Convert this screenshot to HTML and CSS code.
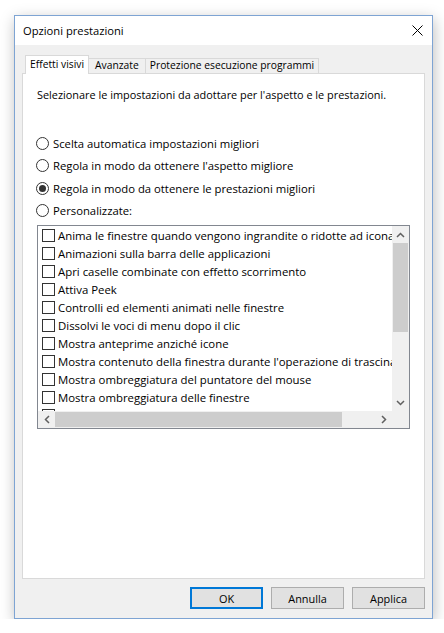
FILE: index.html
```html
<!DOCTYPE html>
<html lang="it">
<head>
  <meta charset="UTF-8">
  <meta name="viewport" content="width=device-width, initial-scale=1.0">
  <title>Opzioni prestazioni</title>
  <link rel="stylesheet" href="styles.css">
</head>
<body>
  <div class="window">
    <div class="titlebar">
      <span class="title">Opzioni prestazioni</span>
      <svg class="close" width="11" height="11" viewBox="0 0 11 11">
        <path d="M0.5 0.5 L10.5 10.5 M10.5 0.5 L0.5 10.5" stroke="#000" stroke-width="1" fill="none"/>
      </svg>
    </div>
    <div class="client">
      <div class="tabs">
        <div class="tab active">Effetti visivi</div>
        <div class="tab">Avanzate</div>
        <div class="tab">Protezione esecuzione programmi</div>
      </div>
      <div class="panel">
        <p class="intro">Selezionare le impostazioni da adottare per l'aspetto e le prestazioni.</p>
        <div class="radios">
          <label class="radio"><span class="dot"></span>Scelta automatica impostazioni migliori</label>
          <label class="radio"><span class="dot"></span>Regola in modo da ottenere l'aspetto migliore</label>
          <label class="radio"><span class="dot checked"></span>Regola in modo da ottenere le prestazioni migliori</label>
          <label class="radio"><span class="dot"></span>Personalizzate:</label>
        </div>
        <div class="listbox">
          <div class="items">
            <div class="item"><span class="box"></span>Anima le finestre quando vengono ingrandite o ridotte ad icona</div>
            <div class="item"><span class="box"></span>Animazioni sulla barra delle applicazioni</div>
            <div class="item"><span class="box"></span>Apri caselle combinate con effetto scorrimento</div>
            <div class="item"><span class="box"></span>Attiva Peek</div>
            <div class="item"><span class="box"></span>Controlli ed elementi animati nelle finestre</div>
            <div class="item"><span class="box"></span>Dissolvi le voci di menu dopo il clic</div>
            <div class="item"><span class="box"></span>Mostra anteprime anziché icone</div>
            <div class="item"><span class="box"></span>Mostra contenuto della finestra durante l'operazione di trascinamento</div>
            <div class="item"><span class="box"></span>Mostra ombreggiatura del puntatore del mouse</div>
            <div class="item"><span class="box"></span>Mostra ombreggiatura delle finestre</div>
            <div class="item"><span class="box"></span></div>
          </div>
          <div class="vscroll">
            <div class="arrow">
              <svg width="9" height="6" viewBox="0 0 9 6"><polyline points="1,5 4.5,1.5 8,5" fill="none" stroke="#606060" stroke-width="1.5"/></svg>
            </div>
            <div class="vtrack"><div class="vthumb"></div></div>
            <div class="arrow">
              <svg width="9" height="6" viewBox="0 0 9 6"><polyline points="1,1 4.5,4.5 8,1" fill="none" stroke="#606060" stroke-width="1.5"/></svg>
            </div>
          </div>
          <div class="hscroll">
            <div class="arrow">
              <svg width="6" height="9" viewBox="0 0 6 9"><polyline points="5,1 1.5,4.5 5,8" fill="none" stroke="#606060" stroke-width="1.5"/></svg>
            </div>
            <div class="htrack"><div class="hthumb"></div></div>
            <div class="arrow">
              <svg width="6" height="9" viewBox="0 0 6 9"><polyline points="1,1 4.5,4.5 1,8" fill="none" stroke="#606060" stroke-width="1.5"/></svg>
            </div>
          </div>
          <div class="corner"></div>
        </div>
      </div>
      <div class="buttons">
        <button class="btn default">OK</button>
        <button class="btn">Annulla</button>
        <button class="btn">Applica</button>
      </div>
    </div>
  </div>
</body>
</html>
```

FILE: styles.css
```css
* { box-sizing: border-box; }
body {
  margin: 0;
  padding: 15px 0 0 14px;
  background: #fff;
  font-family: "Open Sans", "Noto Sans", sans-serif;
  font-size: 10.9px;
  color: #000;
}
.window {
  width: 419px;
  height: 604px;
  border: 1px solid #7ea4d3;
  background: #f0f0f0;
  box-shadow: 1px 4px 14px rgba(0, 0, 0, .26);
  display: flex;
  flex-direction: column;
}
.titlebar {
  height: 29px;
  background: #fff;
  display: flex;
  align-items: center;
  justify-content: space-between;
  padding: 0 9px 0 8px;
}
.title { font-size: 11.2px; }
.client {
  flex: 1;
  display: flex;
  flex-direction: column;
  padding: 10px 7px 9px 7px;
}
.tabs {
  display: flex;
  align-items: flex-end;
  height: 18px;
  padding-left: 3px;
  position: relative;
  z-index: 1;
  font-size: 10.3px;
}
.tab {
  height: 15px;
  line-height: 13px;
  padding: 0 6px;
  border: 1px solid #d9d9d9;
  border-bottom: 0;
  border-left: 0;
  background: #f0f0f0;
  white-space: nowrap;
}
.tab:last-child { padding: 0 4px; }
.tab.active {
  height: 19px;
  line-height: 16px;
  margin-bottom: -1px;
  border-left: 1px solid #d9d9d9;
  background: #fff;
  padding: 0 4px;
}
.panel {
  height: 506px;
  width: 403px;
  background: #fff;
  border: 1px solid #d9d9d9;
  padding: 13px 14px;
}
.intro {
  margin: 0;
  line-height: 16px;
}
.radios {
  margin: 29px 0 0 -1px;
  font-size: 11.3px;
}
.radio {
  display: flex;
  align-items: center;
  height: 22.5px;
  gap: 4px;
}
.dot {
  width: 13px;
  height: 13px;
  border: 1px solid #333;
  border-radius: 50%;
  background: #fff;
  display: flex;
  align-items: center;
  justify-content: center;
}
.dot.checked::after {
  content: "";
  width: 7px;
  height: 7px;
  border-radius: 50%;
  background: #333;
}
.listbox {
  margin-top: 3px;
  width: 373px;
  height: 204px;
  border: 1px solid #828790;
  display: grid;
  grid-template-columns: 1fr 17px;
  grid-template-rows: 1fr 17px;
}
.items {
  overflow: hidden;
  white-space: nowrap;
  font-size: 11.4px;
}
.item {
  height: 18px;
  display: flex;
  align-items: center;
  gap: 3px;
  padding-left: 4px;
}
.box {
  flex: none;
  width: 13px;
  height: 13px;
  border: 1px solid #333;
  background: #fff;
}
.vscroll {
  background: #f0f0f0;
  display: flex;
  flex-direction: column;
}
.arrow {
  flex: none;
  width: 17px;
  height: 17px;
  display: flex;
  align-items: center;
  justify-content: center;
}
.vtrack { flex: 1; }
.vthumb {
  height: 89px;
  margin: 0 1px;
  background: #cdcdcd;
}
.hscroll {
  background: #f0f0f0;
  display: flex;
}
.htrack { flex: 1; }
.hthumb {
  width: 287px;
  height: 15px;
  margin: 1px 0;
  background: #cdcdcd;
}
.corner { background: #f0f0f0; }
.buttons {
  margin-top: 8px;
  display: flex;
  justify-content: flex-end;
  gap: 8px;
  width: 403px;
}
.btn {
  width: 73px;
  height: 22px;
  padding: 0;
  border: 1px solid #adadad;
  background: #e1e1e1;
  font-family: inherit;
  font-size: 10.9px;
  color: #000;
}
.btn.default {
  border: 2px solid #0078d7;
}
```
